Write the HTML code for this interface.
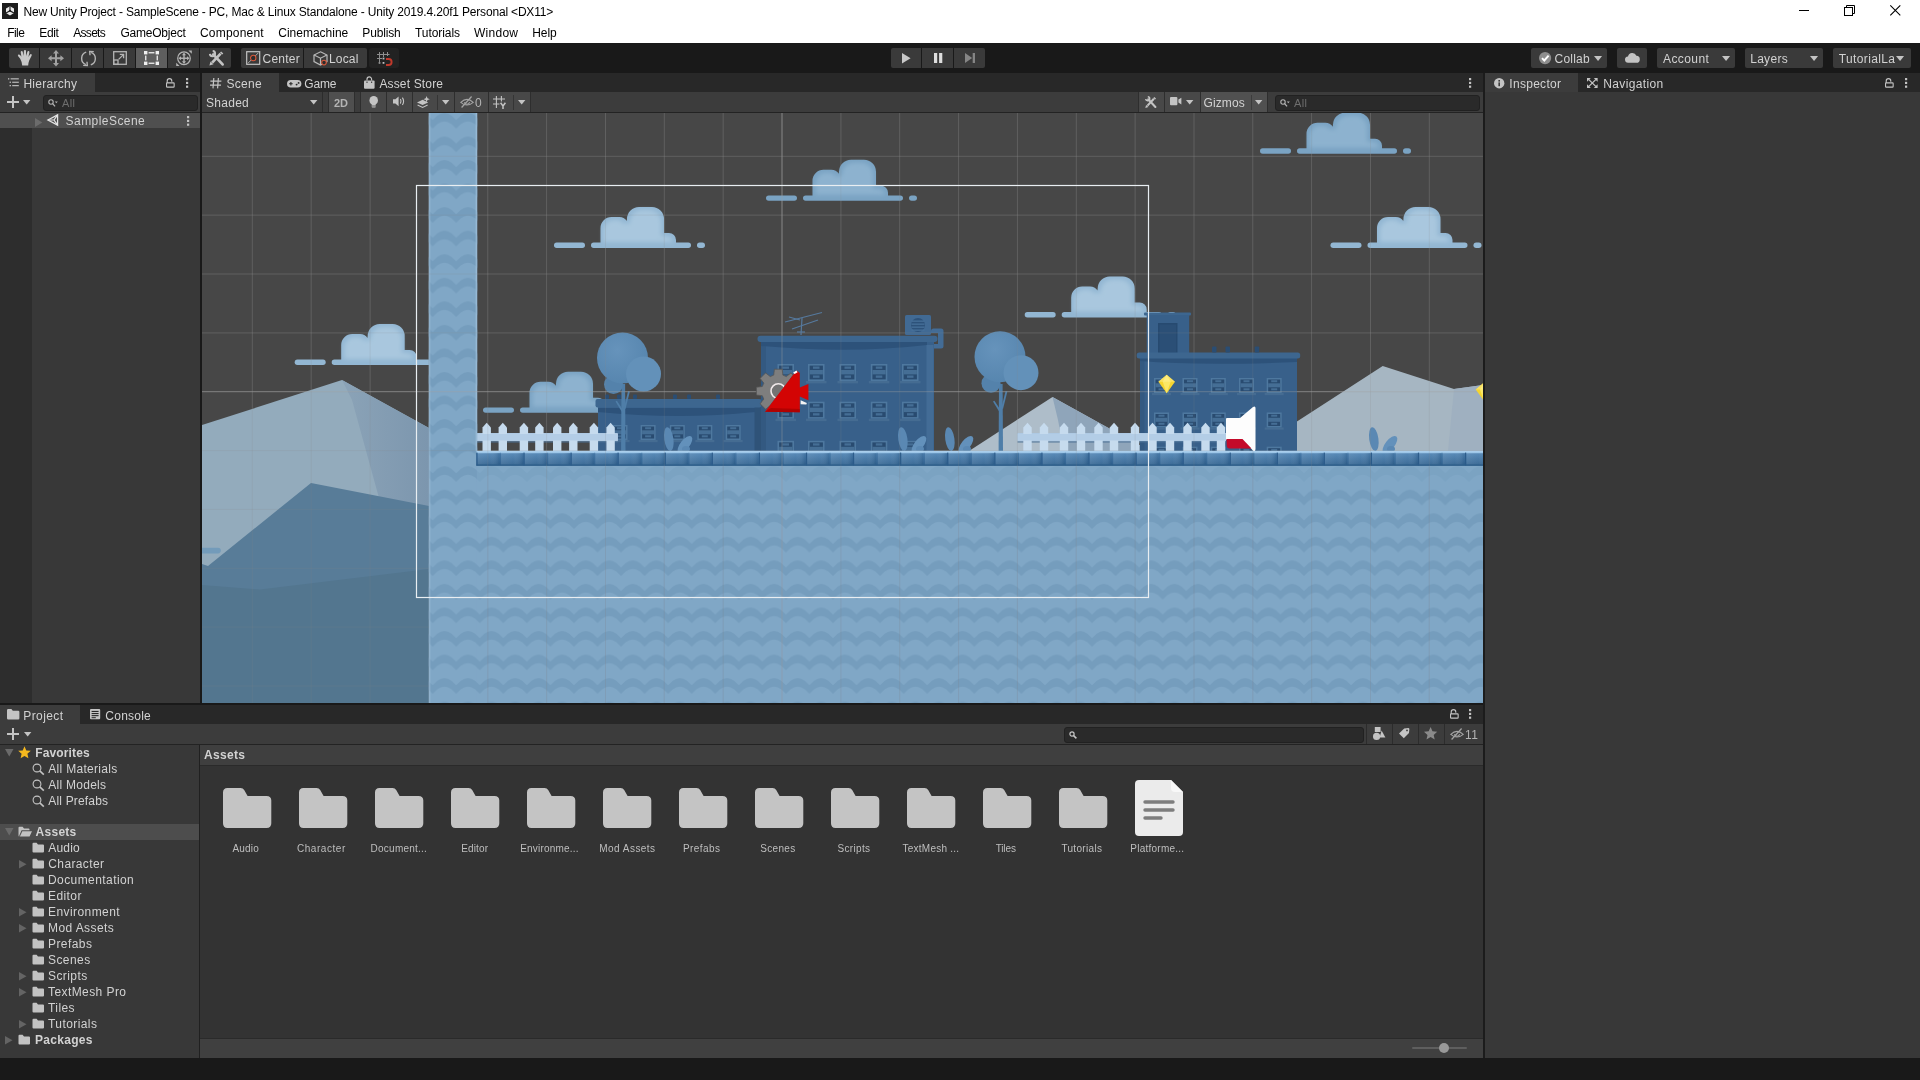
<!DOCTYPE html>
<html><head><meta charset="utf-8">
<style>
*{box-sizing:border-box;margin:0;padding:0}
html,body{width:1920px;height:1080px;overflow:hidden;background:#383838}
body{font-family:"Liberation Sans",sans-serif;font-size:12px;color:#d2d2d2;position:relative}
.abs{position:absolute}
.t{position:absolute;white-space:nowrap;line-height:16px;letter-spacing:.42px}
#title{left:0;top:0;width:1920px;height:43px;background:#fff;color:#000}
#title .t{letter-spacing:0}
#mainbar{left:0;top:43px;width:1920px;height:30px;background:#191919}
.tb{position:absolute;top:5px;height:20px;background:#3a3a3a;border-radius:2px}
.tabbar{position:absolute;height:19px;background:#282828}
.tab{position:absolute;top:0;height:19px;background:#3c3c3c;border-top:1px solid #3c3c3c}
.ptool{position:absolute;height:21px;background:#3c3c3c;border-bottom:1px solid #232323}
.sbtn{position:absolute;top:0;height:20px;background:#484848;border-left:1px solid #2e2e2e;border-right:1px solid #2e2e2e}
.search{position:absolute;background:#2a2a2a;border:1px solid #212121;border-radius:3px}
.row{position:absolute;left:0;height:16px;width:198px}
svg{position:absolute;overflow:visible}
.lab{font-size:10px;letter-spacing:.4px;color:#bebebe}
#root{position:absolute;left:0;top:0;width:1920px;height:1080px;will-change:transform}
</style></head><body><div id="root">
<!-- TITLE + MENU -->
<div id="title" class="abs">
<div class="abs" style="left:2px;top:3px;width:16px;height:16px;background:#222"></div>
<div class="t" style="left:23.40px;top:3.5px;letter-spacing:-0.177px">New Unity Project - SampleScene - PC, Mac &amp; Linux Standalone - Unity 2019.4.20f1 Personal &lt;DX11&gt;</div>
<div class="t" style="left:7.25px;top:24.5px;letter-spacing:-0.565px">File</div>
<div class="t" style="left:39.30px;top:24.5px;letter-spacing:-0.362px">Edit</div>
<div class="t" style="left:73.30px;top:24.5px;letter-spacing:-0.723px">Assets</div>
<div class="t" style="left:120.40px;top:24.5px;letter-spacing:-0.218px">GameObject</div>
<div class="t" style="left:200.00px;top:24.5px;letter-spacing:0.194px">Component</div>
<div class="t" style="left:278.30px;top:24.5px;letter-spacing:-0.005px">Cinemachine</div>
<div class="t" style="left:362.30px;top:24.5px;letter-spacing:-0.160px">Publish</div>
<div class="t" style="left:415.00px;top:24.5px;letter-spacing:-0.072px">Tutorials</div>
<div class="t" style="left:474.00px;top:24.5px;letter-spacing:0.263px">Window</div>
<div class="t" style="left:532.30px;top:24.5px;letter-spacing:-0.096px">Help</div>
</div>
<!-- MAIN TOOLBAR -->
<div id="mainbar" class="abs">
<div class="tb" style="left:9px;width:30px;border-radius:2px 0 0 2px"></div>
<div class="tb" style="left:40px;width:31px;border-radius:0"></div>
<div class="tb" style="left:72px;width:31px;border-radius:0"></div>
<div class="tb" style="left:104px;width:31px;border-radius:0"></div>
<div class="tb" style="left:136px;width:31px;border-radius:0;background:#5e5e5e"></div>
<div class="tb" style="left:168px;width:31px;border-radius:0"></div>
<div class="tb" style="left:200px;width:31px;border-radius:0 2px 2px 0"></div>
<div class="tb" style="left:241px;width:62px;border-radius:2px 0 0 2px"></div>
<div class="tb" style="left:304px;width:63px;border-radius:0 2px 2px 0"></div>
<div class="tb" style="left:369px;width:30px;background:#222;border-radius:3px"></div>
<div class="tb" style="left:891px;width:30px;border-radius:2px 0 0 2px"></div>
<div class="tb" style="left:922px;width:31px;border-radius:0"></div>
<div class="tb" style="left:954px;width:31px;border-radius:0 2px 2px 0"></div>
<div class="tb" style="left:1531px;width:76px"></div>
<div class="tb" style="left:1617px;width:30px"></div>
<div class="tb" style="left:1657px;width:78px"></div>
<div class="tb" style="left:1745px;width:78px"></div>
<div class="tb" style="left:1833px;width:78px"></div>
<div class="t" style="left:262.50px;top:8px;letter-spacing:0.244px">Center</div>
<div class="t" style="left:329.00px;top:8px;letter-spacing:0.153px">Local</div>
<div class="t" style="left:1554.60px;top:8px;letter-spacing:0.194px">Collab</div>
<div class="t" style="left:1663.00px;top:8px;letter-spacing:0.407px">Account</div>
<div class="t" style="left:1750.20px;top:8px;letter-spacing:0.294px">Layers</div>
<div class="t" style="left:1838.75px;top:8px;letter-spacing:0.370px">TutorialLa</div>
</div>
<!-- HIERARCHY -->
<div class="tabbar" style="left:0;top:73px;width:200px"><div class="tab" style="left:0;width:95px"></div>
<div class="t" style="left:23.40px;top:3px;letter-spacing:0.280px">Hierarchy</div></div>
<div class="ptool" style="left:0;top:92px;width:200px">
<div class="search" style="left:43px;top:3px;width:155px;height:16px"></div>
<div class="t" style="left:62px;top:3px;color:#6e6e6e;font-size:11px">All</div>
</div>
<div class="abs" style="left:0;top:113px;width:32px;height:590px;background:#2d2d2d"></div>
<div class="abs" style="left:0;top:113px;width:200px;height:15px;background:#4f4f4f"></div>
<div class="t" style="left:65.60px;top:112.5px;letter-spacing:0.448px">SampleScene</div>
<div class="abs" style="left:200px;top:73px;width:2px;height:632px;background:#191919"></div>
<!-- SCENE -->
<div class="tabbar" style="left:202px;top:73px;width:1281px"><div class="tab" style="left:0;width:77px"></div>
<div class="t" style="left:24.40px;top:3px;letter-spacing:0.292px">Scene</div>
<div class="t" style="left:102.30px;top:3px;letter-spacing:-0.163px">Game</div>
<div class="t" style="left:177.40px;top:3px;letter-spacing:0.157px">Asset Store</div>
</div>
<div class="ptool" id="stool" style="left:202px;top:92px;width:1281px">
<div class="t" style="left:4.00px;top:3px;letter-spacing:0.275px">Shaded</div>
<div class="abs" style="left:119.5px;top:0;width:1px;height:20px;background:#2c2c2c"></div><div class="sbtn" style="left:126px;width:27px;background:#4f4f4f"></div>
<div class="t" style="left:132px;top:3px;font-size:11px;color:#b4b4b4;letter-spacing:0"><b>2D</b></div>
<div class="sbtn" style="left:158px;width:27px"></div>
<div class="sbtn" style="left:184px;width:27px"></div>
<div class="sbtn" style="left:210px;width:43px"></div>
<div class="sbtn" style="left:252px;width:35px"></div>
<div class="sbtn" style="left:286px;width:43px"></div>
<div class="t" style="left:273px;top:3px;color:#b4b4b4">0</div>
<div class="sbtn" style="left:936px;width:27px"></div>
<div class="sbtn" style="left:962px;width:37px"></div>
<div class="sbtn" style="left:998px;width:68px;background:#505050"></div>
<div class="t" style="left:1001.50px;top:3px;letter-spacing:0.116px">Gizmos</div>
<div class="search" style="left:1073px;top:3px;width:205px;height:16px"></div>
<div class="t" style="left:1092px;top:3px;color:#6e6e6e;font-size:11px">All</div>
</div>
<div id="scene" class="abs" style="left:202px;top:113px;width:1281px;height:590px;background:#474747;overflow:hidden">
<svg width="1281" height="590" viewBox="202 113 1281 590" style="left:0;top:0">
<defs>
<linearGradient id="cg" x1="0" y1="0" x2="0" y2="1"><stop offset="0" stop-color="#9dbdd8"/><stop offset=".55" stop-color="#8eb2cf"/><stop offset="1" stop-color="#80a6c6"/></linearGradient>
<linearGradient id="mr" x1="0" y1="0" x2="1" y2="0"><stop offset="0" stop-color="#8ba3b7"/><stop offset="1" stop-color="#7c96ae"/></linearGradient>
<linearGradient id="tile" x1="0" y1="0" x2="0" y2="1"><stop offset="0" stop-color="#b4d6f1"/><stop offset=".12" stop-color="#9cc6e8"/><stop offset=".2" stop-color="#5084b3"/><stop offset=".85" stop-color="#386996"/><stop offset="1" stop-color="#2e5c87"/></linearGradient>
<linearGradient id="tsh" x1="0" y1="0" x2="1" y2="0"><stop offset="0" stop-color="#fff" stop-opacity=".10"/><stop offset=".55" stop-color="#fff" stop-opacity=".04"/><stop offset="1" stop-color="#0a3560" stop-opacity=".22"/></linearGradient>
<radialGradient id="tg" cx=".4" cy=".35" r=".7"><stop offset="0" stop-color="#6693bb"/><stop offset="1" stop-color="#5685ae"/></radialGradient>
<pattern id="wave" x="432.65" y="466.15" width="23.55" height="23.55" patternUnits="userSpaceOnUse">
<path d="M0,7 L4.6,2.6 Q11.775,-2.6 18.95,2.6 L23.55,7 L23.55,15.6 L18.95,11.2 Q11.775,6 4.6,11.2 L0,15.6 Z" fill="#759dbd"/>
</pattern>
<filter id="inner" x="-10%" y="-10%" width="120%" height="120%"><feMorphology operator="erode" radius="3.2"/><feGaussianBlur stdDeviation="2.2"/></filter>
<path id="cshape" d="M2.7,0 A2.7,2.7 0 0 1 2.7,-5.4 L9.5,-5.4 L9.5,-20 A11,11 0 0 1 20.5,-31 L28,-31 A9,9 0 0 1 35.8,-27 L36,-29 A12,12 0 0 1 48,-41 L61,-41 A12,12 0 0 1 73,-29 L73,-15 L78,-15 A7,7 0 0 1 85,-8 L85,-5.4 L97.3,-5.4 A2.7,2.7 0 0 1 97.3,0 Z"/>
<path id="cinner" d="M9.5,-5.4 L9.5,-20 A11,11 0 0 1 20.5,-31 L28,-31 A9,9 0 0 1 35.8,-27 L36,-29 A12,12 0 0 1 48,-41 L61,-41 A12,12 0 0 1 73,-29 L73,-15 L78,-15 A7,7 0 0 1 85,-8 L85,-3 L9.5,-3 Z"/>
<g id="cloudD"><rect x="-37" y="-5.4" width="31" height="5.4" rx="2.7" fill="#7aa3c3"/><rect x="106" y="-5.4" width="8" height="5.4" rx="2.7" fill="#7aa3c3"/><use href="#cshape" fill="#7aa3c3"/><use href="#cinner" fill="#8db2cf" filter="url(#inner)"/></g>
<g id="cloudL"><rect x="-37" y="-5.4" width="31" height="5.4" rx="2.7" fill="#93b7d3"/><rect x="106" y="-5.4" width="8" height="5.4" rx="2.7" fill="#93b7d3"/><use href="#cshape" fill="#93b7d3"/><use href="#cinner" fill="#a9c7de" filter="url(#inner)"/></g>
<g id="win"><rect x="0" y="0" width="16.5" height="17" fill="#4e789f"/><rect x="1.6" y="1.6" width="13.3" height="13.8" fill="#294b70"/><rect x="1.6" y="6" width="13.3" height="4.4" fill="#456e95"/><rect x="5" y="2.5" width="6.5" height="2.3" fill="#456e95"/><rect x="5" y="11.5" width="6.5" height="2.3" fill="#456e95"/><rect x="-2" y="17" width="20.5" height="2.4" fill="#456c92"/></g>
<g id="win2"><rect x="0" y="0" width="15" height="15" fill="#4e789f"/><rect x="1.5" y="1.5" width="12" height="12" fill="#294b70"/><rect x="1.5" y="5.3" width="12" height="4" fill="#456e95"/><rect x="4.5" y="2.2" width="6" height="2" fill="#456e95"/><rect x="4.5" y="10.3" width="6" height="2" fill="#456e95"/><rect x="-2" y="15" width="19" height="2.2" fill="#456c92"/></g>
<g id="bush"><ellipse cx="4.5" cy="-12" rx="4.6" ry="12" transform="rotate(-8 4.5 0)" fill="#5a88b3"/><ellipse cx="14" cy="-8" rx="4.6" ry="10.5" transform="rotate(38 14 0)" fill="#6391bb"/><ellipse cx="20" cy="-2" rx="4" ry="3" fill="#5a88b3"/></g>
</defs>
<path d="M252.3,113V703M311.2,113V703M370.1,113V703M428.9,113V703M487.8,113V703M546.6,113V703M605.5,113V703M664.3,113V703M723.2,113V703M782.0,113V703M840.9,113V703M899.7,113V703M958.6,113V703M1017.4,113V703M1076.3,113V703M1135.1,113V703M1194.0,113V703M1252.8,113V703M1311.6,113V703M1370.5,113V703M1429.3,113V703M202,156.3H1483M202,215.1H1483M202,274.0H1483M202,332.9H1483M202,391.7H1483M202,450.6H1483M202,509.4H429M202,568.3H429M202,627.1H429M202,686.0H429" stroke="#8a8a8a" stroke-opacity=".26" stroke-width="1" fill="none"/>
<path d="M782.0,113V703M202,391.7H1483" stroke="#a0a0a0" stroke-opacity=".25" stroke-width="1" fill="none"/>
<polygon points="202,425 342,380 429,428 429,703 202,703" fill="#93abbc"/>
<polygon points="342,380 429,428 429,520 379,498 352,400" fill="url(#mr)"/>
<polygon points="202,564 208,566 311,483 429,506 429,703 202,703" fill="#587c98"/>
<polygon points="202,585 260,589.5 429,569 429,703 202,703" fill="#53768f"/>
<rect x="198" y="547.8" width="22.8" height="5.6" rx="2.8" fill="#739bba"/>
<polygon points="969,451 1052.5,397 1150,451" fill="#aebdc9"/>
<polygon points="1052.5,397 1150,451 1064,451 1058,420" fill="#8fa5ba"/>
<polygon points="1290,426 1382.7,366 1454,389 1483,385 1483,451 1290,451" fill="#a6b6c2"/>
<polygon points="1454,389 1483,385 1483,451 1448,451" fill="#9fb0c0"/>
<use href="#cloudD" x="1297" y="153.7"/>
<use href="#cloudL" x="1367.5" y="248"/>
<use href="#cloudL" x="591" y="248"/>
<use href="#cloudD" x="803" y="200.8"/>
<use href="#cloudL" x="331.7" y="365"/>
<use href="#cloudL" x="1061.7" y="317.5"/>
<use href="#cloudD" x="520" y="412.8"/>
<rect x="598" y="404" width="163" height="47" fill="#38608a"/>
<rect x="754.5" y="407" width="6.5" height="44" fill="#2f5378"/>
<path d="M598,408 L755,408 L755,412 Q680,420 598,412 Z" fill="#2d527a"/>
<rect x="595.5" y="399" width="166" height="8.5" rx="2" fill="#3d668f"/>
<use href="#win2" x="612.5" y="425"/>
<use href="#win2" x="640.6" y="425"/>
<use href="#win2" x="669.8" y="425"/>
<use href="#win2" x="697.3" y="425"/>
<use href="#win2" x="725.7" y="425"/>
<rect x="605" y="394.5" width="4" height="4.5" rx="1" fill="#2a4d73"/>
<rect x="617" y="394.5" width="4" height="4.5" rx="1" fill="#2a4d73"/>
<rect x="633" y="394.5" width="4" height="4.5" rx="1" fill="#2a4d73"/>
<rect x="673" y="394.5" width="4" height="4.5" rx="1" fill="#2a4d73"/>
<rect x="687" y="394.5" width="4" height="4.5" rx="1" fill="#2a4d73"/>
<rect x="716" y="394.5" width="4" height="4.5" rx="1" fill="#2a4d73"/>
<path d="M931,336 L931,331 Q931,328.5 933.5,328.5 L941,328.5 Q943.5,328.5 943.5,331 L943.5,346 Q943.5,348.5 941,348.5 L934,348.5 L934,451 L927,451 L927,344 L938,344 L938,333 L931,333 Z" fill="#436c96"/>
<rect x="761" y="341" width="173" height="110" fill="#38608a"/>
<rect x="761" y="341" width="5" height="110" fill="#335981"/>
<rect x="926.5" y="345" width="7" height="106" fill="#436c96"/>
<path d="M761,341 L927,341 L927,345 Q850,354 761,346 Z" fill="#2d527a"/>
<rect x="757.5" y="335.8" width="180" height="6.2" rx="3" fill="#3d668f"/>
<rect x="905" y="315" width="26" height="20" rx="1.5" fill="#416a94"/>
<circle cx="918" cy="325" r="7" fill="#2d527a"/>
<rect x="911.5" y="320.5" width="13" height="1.3" fill="#47709a"/>
<rect x="911.5" y="323.5" width="13" height="1.3" fill="#47709a"/>
<rect x="911.5" y="326.5" width="13" height="1.3" fill="#47709a"/>
<rect x="911.5" y="329.5" width="13" height="1.3" fill="#47709a"/>
<g stroke="#56799d" stroke-width="1.2" fill="none"><path d="M801,335 L802,318"/><path d="M785,322 L822,312.5"/><path d="M789,317 L800,320"/><path d="M792,329 L818,320"/><path d="M797,332 L805,332"/></g>
<use href="#win" x="777.5" y="364"/>
<use href="#win" x="808" y="364"/>
<use href="#win" x="839.5" y="364"/>
<use href="#win" x="870.8" y="364"/>
<use href="#win" x="902" y="364"/>
<use href="#win" x="777.5" y="401.7"/>
<use href="#win" x="808" y="401.7"/>
<use href="#win" x="839.5" y="401.7"/>
<use href="#win" x="870.8" y="401.7"/>
<use href="#win" x="902" y="401.7"/>
<use href="#win" x="777.5" y="440.8"/>
<use href="#win" x="808" y="440.8"/>
<use href="#win" x="839.5" y="440.8"/>
<use href="#win" x="870.8" y="440.8"/>
<use href="#win" x="902" y="440.8"/>
<rect x="1144" y="312.5" width="47" height="3" rx="1" fill="#3d668f"/>
<rect x="1146.7" y="315" width="42.5" height="38" fill="#38608a"/>
<rect x="1158" y="323" width="19.5" height="30" fill="#274a70"/><rect x="1159.5" y="324.5" width="16.5" height="28" fill="#2b4f76"/>
<rect x="1140" y="358" width="157" height="93" fill="#38608a"/>
<rect x="1140" y="358" width="4.5" height="93" fill="#335981"/>
<path d="M1140,358 L1297,358 L1297,362 Q1200,366 1140,361 Z" fill="#2d527a"/>
<rect x="1136.7" y="352.5" width="163.5" height="6" rx="2.5" fill="#3d668f"/>
<rect x="1212" y="346.5" width="4.5" height="6" rx="1" fill="#2a4d73"/>
<rect x="1225.5" y="346.5" width="4.5" height="6" rx="1" fill="#2a4d73"/>
<rect x="1254.7" y="346.5" width="4.5" height="6" rx="1" fill="#2a4d73"/>
<use href="#win2" x="1154" y="378"/>
<use href="#win2" x="1182.5" y="378"/>
<use href="#win2" x="1210.8" y="378"/>
<use href="#win2" x="1239" y="378"/>
<use href="#win2" x="1266.7" y="378"/>
<use href="#win2" x="1154" y="412.5"/>
<use href="#win2" x="1182.5" y="412.5"/>
<use href="#win2" x="1210.8" y="412.5"/>
<use href="#win2" x="1239" y="412.5"/>
<use href="#win2" x="1266.7" y="412.5"/>
<use href="#win2" x="1154" y="446.7"/>
<use href="#win2" x="1182.5" y="446.7"/>
<use href="#win2" x="1210.8" y="446.7"/>
<use href="#win2" x="1239" y="446.7"/>
<use href="#win2" x="1266.7" y="446.7"/>
<path d="M621.1,451 L621.5,384 L625.1,384 L625.5,451 Z" fill="#4f7ea8"/>
<path d="M623.9,408 L628.1,391 L629.9,391.6 L625.5,409 Z" fill="#4f7ea8"/>
<path d="M621.9,412 L615.5,401.6 L616.9,400.8 L622.1,408.6 Z" fill="#4f7ea8"/>
<circle cx="613.5" cy="384.5" r="9.5" fill="#5482ab"/>
<circle cx="622.5" cy="358" r="25.5" fill="url(#tg)"/>
<circle cx="643.5" cy="374" r="17.5" fill="#6391b9"/>
<path d="M998.6,451 L999,384 L1002.6,384 L1003,451 Z" fill="#4f7ea8"/>
<path d="M1001.4,408 L1005.6,391 L1007.4,391.6 L1003,409 Z" fill="#4f7ea8"/>
<path d="M999.4,412 L993,401.6 L994.4,400.8 L999.6,408.6 Z" fill="#4f7ea8"/>
<circle cx="991" cy="383.2" r="9.5" fill="#5482ab"/>
<circle cx="1000" cy="356.7" r="25.5" fill="url(#tg)"/>
<circle cx="1021" cy="372.7" r="17.5" fill="#6391b9"/>
<use href="#bush" x="900" y="451"/>
<use href="#bush" x="947" y="451"/>
<use href="#bush" x="1371" y="451"/>
<use href="#bush" x="666" y="451"/>
<rect x="476.5" y="433" width="141.29999999999995" height="8.3" fill="#aec9e3"/>
<rect x="476.5" y="441.3" width="141.29999999999995" height="1.3" fill="#4a6f94" opacity=".75"/>
<path d="M482.5,451 L482.5,427.5 L486.7,422.8 L490.9,427.5 L490.9,451 Z" fill="#c6dbee"/>
<path d="M498.6,451 L498.6,427.5 L502.8,422.8 L507.0,427.5 L507.0,451 Z" fill="#c6dbee"/>
<path d="M519.6999999999999,451 L519.6999999999999,427.5 L523.9,422.8 L528.1,427.5 L528.1,451 Z" fill="#c6dbee"/>
<path d="M535.1999999999999,451 L535.1999999999999,427.5 L539.4,422.8 L543.6,427.5 L543.6,451 Z" fill="#c6dbee"/>
<path d="M553.0,451 L553.0,427.5 L557.2,422.8 L561.4000000000001,427.5 L561.4000000000001,451 Z" fill="#c6dbee"/>
<path d="M569.0999999999999,451 L569.0999999999999,427.5 L573.3,422.8 L577.5,427.5 L577.5,451 Z" fill="#c6dbee"/>
<path d="M589.6999999999999,451 L589.6999999999999,427.5 L593.9,422.8 L598.1,427.5 L598.1,451 Z" fill="#c6dbee"/>
<path d="M606.4,451 L606.4,427.5 L610.6,422.8 L614.8000000000001,427.5 L614.8000000000001,451 Z" fill="#c6dbee"/>
<rect x="476.5" y="434" width="141.29999999999995" height="6.5" fill="#b3cde6"/>
<rect x="1017.5" y="433" width="208.5" height="8.3" fill="#aec9e3"/>
<rect x="1017.5" y="441.3" width="208.5" height="1.3" fill="#4a6f94" opacity=".75"/>
<path d="M1023.3,451 L1023.3,427.5 L1027.5,422.8 L1031.7,427.5 L1031.7,451 Z" fill="#c6dbee"/>
<path d="M1039.8,451 L1039.8,427.5 L1044,422.8 L1048.2,427.5 L1048.2,451 Z" fill="#c6dbee"/>
<path d="M1059.8,451 L1059.8,427.5 L1064,422.8 L1068.2,427.5 L1068.2,451 Z" fill="#c6dbee"/>
<path d="M1076.8,451 L1076.8,427.5 L1081,422.8 L1085.2,427.5 L1085.2,451 Z" fill="#c6dbee"/>
<path d="M1094.3,451 L1094.3,427.5 L1098.5,422.8 L1102.7,427.5 L1102.7,451 Z" fill="#c6dbee"/>
<path d="M1109.8,451 L1109.8,427.5 L1114,422.8 L1118.2,427.5 L1118.2,451 Z" fill="#c6dbee"/>
<path d="M1130.8,451 L1130.8,427.5 L1135,422.8 L1139.2,427.5 L1139.2,451 Z" fill="#c6dbee"/>
<path d="M1148.3,451 L1148.3,427.5 L1152.5,422.8 L1156.7,427.5 L1156.7,451 Z" fill="#c6dbee"/>
<path d="M1165.8,451 L1165.8,427.5 L1170,422.8 L1174.2,427.5 L1174.2,451 Z" fill="#c6dbee"/>
<path d="M1183.3,451 L1183.3,427.5 L1187.5,422.8 L1191.7,427.5 L1191.7,451 Z" fill="#c6dbee"/>
<path d="M1201.3,451 L1201.3,427.5 L1205.5,422.8 L1209.7,427.5 L1209.7,451 Z" fill="#c6dbee"/>
<path d="M1216.8,451 L1216.8,427.5 L1221,422.8 L1225.2,427.5 L1225.2,451 Z" fill="#c6dbee"/>
<rect x="1017.5" y="434" width="208.5" height="6.5" fill="#b3cde6"/>
<rect x="428.8" y="113" width="48.4" height="590" fill="#80a7c6"/>
<rect x="476.8" y="465.4" width="1007" height="238" fill="#80a7c6"/>
<rect x="428.8" y="113" width="48.4" height="590" fill="url(#wave)"/>
<rect x="476.8" y="465.4" width="1007" height="238" fill="url(#wave)"/>
<rect x="428.8" y="113" width="1.6" height="590" fill="#a9c8e2" opacity=".4"/>
<rect x="475.6" y="113" width="1.6" height="338" fill="#a9c8e2" opacity=".55"/>
<rect x="476.8" y="465.4" width="1007" height="16.5" fill="#80a7c6" opacity=".55"/>
<rect x="476.5" y="450.8" width="1007" height="14.8" fill="url(#tile)"/>
<rect x="477.6" y="453" width="22" height="11.6" fill="url(#tsh)"/>
<rect x="476.3" y="452.6" width="1.2" height="13" fill="#2a5a88" opacity="0.95"/>
<rect x="501.1" y="453" width="22" height="11.6" fill="url(#tsh)"/>
<rect x="499.8" y="452.6" width="1.2" height="13" fill="#2a5a88" opacity="0.3"/>
<rect x="524.7" y="453" width="22" height="11.6" fill="url(#tsh)"/>
<rect x="523.4" y="452.6" width="1.2" height="13" fill="#2a5a88" opacity="0.95"/>
<rect x="548.2" y="453" width="22" height="11.6" fill="url(#tsh)"/>
<rect x="546.9" y="452.6" width="1.2" height="13" fill="#2a5a88" opacity="0.3"/>
<rect x="571.8" y="453" width="22" height="11.6" fill="url(#tsh)"/>
<rect x="570.5" y="452.6" width="1.2" height="13" fill="#2a5a88" opacity="0.95"/>
<rect x="595.3" y="453" width="22" height="11.6" fill="url(#tsh)"/>
<rect x="594.0" y="452.6" width="1.2" height="13" fill="#2a5a88" opacity="0.3"/>
<rect x="618.8" y="453" width="22" height="11.6" fill="url(#tsh)"/>
<rect x="617.5" y="452.6" width="1.2" height="13" fill="#2a5a88" opacity="0.95"/>
<rect x="642.4" y="453" width="22" height="11.6" fill="url(#tsh)"/>
<rect x="641.1" y="452.6" width="1.2" height="13" fill="#2a5a88" opacity="0.3"/>
<rect x="665.9" y="453" width="22" height="11.6" fill="url(#tsh)"/>
<rect x="664.6" y="452.6" width="1.2" height="13" fill="#2a5a88" opacity="0.95"/>
<rect x="689.5" y="453" width="22" height="11.6" fill="url(#tsh)"/>
<rect x="688.2" y="452.6" width="1.2" height="13" fill="#2a5a88" opacity="0.3"/>
<rect x="713.0" y="453" width="22" height="11.6" fill="url(#tsh)"/>
<rect x="711.7" y="452.6" width="1.2" height="13" fill="#2a5a88" opacity="0.95"/>
<rect x="736.5" y="453" width="22" height="11.6" fill="url(#tsh)"/>
<rect x="735.2" y="452.6" width="1.2" height="13" fill="#2a5a88" opacity="0.3"/>
<rect x="760.1" y="453" width="22" height="11.6" fill="url(#tsh)"/>
<rect x="758.8" y="452.6" width="1.2" height="13" fill="#2a5a88" opacity="0.95"/>
<rect x="783.6" y="453" width="22" height="11.6" fill="url(#tsh)"/>
<rect x="782.3" y="452.6" width="1.2" height="13" fill="#2a5a88" opacity="0.3"/>
<rect x="807.2" y="453" width="22" height="11.6" fill="url(#tsh)"/>
<rect x="805.9" y="452.6" width="1.2" height="13" fill="#2a5a88" opacity="0.95"/>
<rect x="830.7" y="453" width="22" height="11.6" fill="url(#tsh)"/>
<rect x="829.4" y="452.6" width="1.2" height="13" fill="#2a5a88" opacity="0.3"/>
<rect x="854.2" y="453" width="22" height="11.6" fill="url(#tsh)"/>
<rect x="852.9" y="452.6" width="1.2" height="13" fill="#2a5a88" opacity="0.95"/>
<rect x="877.8" y="453" width="22" height="11.6" fill="url(#tsh)"/>
<rect x="876.5" y="452.6" width="1.2" height="13" fill="#2a5a88" opacity="0.3"/>
<rect x="901.3" y="453" width="22" height="11.6" fill="url(#tsh)"/>
<rect x="900.0" y="452.6" width="1.2" height="13" fill="#2a5a88" opacity="0.95"/>
<rect x="924.9" y="453" width="22" height="11.6" fill="url(#tsh)"/>
<rect x="923.6" y="452.6" width="1.2" height="13" fill="#2a5a88" opacity="0.3"/>
<rect x="948.4" y="453" width="22" height="11.6" fill="url(#tsh)"/>
<rect x="947.1" y="452.6" width="1.2" height="13" fill="#2a5a88" opacity="0.95"/>
<rect x="971.9" y="453" width="22" height="11.6" fill="url(#tsh)"/>
<rect x="970.6" y="452.6" width="1.2" height="13" fill="#2a5a88" opacity="0.3"/>
<rect x="995.5" y="453" width="22" height="11.6" fill="url(#tsh)"/>
<rect x="994.2" y="452.6" width="1.2" height="13" fill="#2a5a88" opacity="0.95"/>
<rect x="1019.0" y="453" width="22" height="11.6" fill="url(#tsh)"/>
<rect x="1017.7" y="452.6" width="1.2" height="13" fill="#2a5a88" opacity="0.3"/>
<rect x="1042.6" y="453" width="22" height="11.6" fill="url(#tsh)"/>
<rect x="1041.3" y="452.6" width="1.2" height="13" fill="#2a5a88" opacity="0.95"/>
<rect x="1066.1" y="453" width="22" height="11.6" fill="url(#tsh)"/>
<rect x="1064.8" y="452.6" width="1.2" height="13" fill="#2a5a88" opacity="0.3"/>
<rect x="1089.6" y="453" width="22" height="11.6" fill="url(#tsh)"/>
<rect x="1088.3" y="452.6" width="1.2" height="13" fill="#2a5a88" opacity="0.95"/>
<rect x="1113.2" y="453" width="22" height="11.6" fill="url(#tsh)"/>
<rect x="1111.9" y="452.6" width="1.2" height="13" fill="#2a5a88" opacity="0.3"/>
<rect x="1136.7" y="453" width="22" height="11.6" fill="url(#tsh)"/>
<rect x="1135.4" y="452.6" width="1.2" height="13" fill="#2a5a88" opacity="0.95"/>
<rect x="1160.3" y="453" width="22" height="11.6" fill="url(#tsh)"/>
<rect x="1159.0" y="452.6" width="1.2" height="13" fill="#2a5a88" opacity="0.3"/>
<rect x="1183.8" y="453" width="22" height="11.6" fill="url(#tsh)"/>
<rect x="1182.5" y="452.6" width="1.2" height="13" fill="#2a5a88" opacity="0.95"/>
<rect x="1207.3" y="453" width="22" height="11.6" fill="url(#tsh)"/>
<rect x="1206.0" y="452.6" width="1.2" height="13" fill="#2a5a88" opacity="0.3"/>
<rect x="1230.9" y="453" width="22" height="11.6" fill="url(#tsh)"/>
<rect x="1229.6" y="452.6" width="1.2" height="13" fill="#2a5a88" opacity="0.95"/>
<rect x="1254.4" y="453" width="22" height="11.6" fill="url(#tsh)"/>
<rect x="1253.1" y="452.6" width="1.2" height="13" fill="#2a5a88" opacity="0.3"/>
<rect x="1278.0" y="453" width="22" height="11.6" fill="url(#tsh)"/>
<rect x="1276.7" y="452.6" width="1.2" height="13" fill="#2a5a88" opacity="0.95"/>
<rect x="1301.5" y="453" width="22" height="11.6" fill="url(#tsh)"/>
<rect x="1300.2" y="452.6" width="1.2" height="13" fill="#2a5a88" opacity="0.3"/>
<rect x="1325.0" y="453" width="22" height="11.6" fill="url(#tsh)"/>
<rect x="1323.7" y="452.6" width="1.2" height="13" fill="#2a5a88" opacity="0.95"/>
<rect x="1348.6" y="453" width="22" height="11.6" fill="url(#tsh)"/>
<rect x="1347.3" y="452.6" width="1.2" height="13" fill="#2a5a88" opacity="0.3"/>
<rect x="1372.1" y="453" width="22" height="11.6" fill="url(#tsh)"/>
<rect x="1370.8" y="452.6" width="1.2" height="13" fill="#2a5a88" opacity="0.95"/>
<rect x="1395.7" y="453" width="22" height="11.6" fill="url(#tsh)"/>
<rect x="1394.4" y="452.6" width="1.2" height="13" fill="#2a5a88" opacity="0.3"/>
<rect x="1419.2" y="453" width="22" height="11.6" fill="url(#tsh)"/>
<rect x="1417.9" y="452.6" width="1.2" height="13" fill="#2a5a88" opacity="0.95"/>
<rect x="1442.7" y="453" width="22" height="11.6" fill="url(#tsh)"/>
<rect x="1441.4" y="452.6" width="1.2" height="13" fill="#2a5a88" opacity="0.3"/>
<rect x="1466.3" y="453" width="22" height="11.6" fill="url(#tsh)"/>
<rect x="1465.0" y="452.6" width="1.2" height="13" fill="#2a5a88" opacity="0.95"/>
<rect x="476.5" y="464.4" width="1007" height="1.6" fill="#2f618f" opacity=".7"/>
<path d="M487.8,466V703M546.6,466V703M605.5,466V703M664.3,466V703M723.1,466V703M782.0,466V703M840.9,466V703M899.7,466V703M958.5,466V703M1017.4,466V703M1076.2,466V703M1135.1,466V703M1194.0,466V703M1252.8,466V703M1311.7,466V703M1370.5,466V703M1429.3,466V703" stroke="#6f8aa3" stroke-opacity=".14" stroke-width="1" fill="none"/>
<path d="M252.3,113V703M311.2,113V703M370.1,113V703M428.9,113V703M487.8,113V703M546.6,113V703M605.5,113V703M664.3,113V703M723.2,113V703M782.0,113V703M840.9,113V703M899.7,113V703M958.6,113V703M1017.4,113V703M1076.3,113V703M1135.1,113V703M1194.0,113V703M1252.8,113V703M1311.6,113V703M1370.5,113V703M1429.3,113V703M202,156.3H1483M202,215.1H1483M202,274.0H1483M202,332.9H1483M202,391.7H1483M202,450.6H1483M202,509.4H429M202,568.3H429M202,627.1H429M202,686.0H429" stroke="#8a8a8a" stroke-opacity=".17" stroke-width="1" fill="none"/>
<path d="M782.0,113V703M202,391.7H1483" stroke="#b0b0b0" stroke-opacity=".28" stroke-width="1" fill="none"/>
<rect x="416.5" y="185.5" width="732" height="412" fill="none" stroke="#e9eef2" stroke-width="1.2"/>
<clipPath id="gclip"><polygon points="740,350 800.5,350 796.4,370.6 765,411.7 740,440"/></clipPath>
<g clip-path="url(#gclip)"><polygon points="794.3,386.5 800.2,387.2 800.2,395.0 794.3,395.7 792.8,399.1 796.5,403.8 791.0,409.3 786.3,405.6 782.9,407.1 782.2,413.0 774.4,413.0 773.7,407.1 770.3,405.6 765.6,409.3 760.1,403.8 763.8,399.1 762.3,395.7 756.4,395.0 756.4,387.2 762.3,386.5 763.8,383.1 760.1,378.4 765.6,372.9 770.3,376.6 773.7,375.1 774.4,369.2 782.2,369.2 782.9,375.1 786.3,376.6 791.0,372.9 796.5,378.4 792.8,383.1" fill="#7e7e7e" stroke="#555" stroke-width=".8"/><circle cx="778.3" cy="391.1" r="7.3" fill="#737373" stroke="#f1e9ea" stroke-width="1.6"/></g>
<polygon points="796.4,370.6 799.8,373 799.8,387.4 808.4,383.9 808.4,400.2 799.8,396.6 799.8,412.3 765,411.8" fill="#d30404"/>
<polygon points="765,411.8 799.8,412.3 799.8,409 771,408" fill="#a70303" opacity=".8"/>
<polygon points="793.2,372.6 796.4,370.6 797.6,372.2 794.6,374" fill="#fff"/>
<polygon points="800.6,400.2 806.8,403 806.4,404.6 800.6,404.2" fill="#f4f4f4"/>
<path d="M1166.7,374.8 L1175.0,381.8 L1166.7,393.3 L1158.4,381.8 Z" fill="#f6d52f"/>
<path d="M1166.7,374.8 L1170.7,381.8 L1166.7,393.3 L1162.7,381.8 Z" fill="#fbe766"/>
<path d="M1158.4,381.8 L1175.0,381.8 L1166.7,374.8 Z" fill="#fff2a0" opacity=".45"/>
<path d="M1484,382.5 L1492.3,389.5 L1484,401.0 L1475.7,389.5 Z" fill="#f6d52f"/>
<path d="M1484,382.5 L1488,389.5 L1484,401.0 L1480,389.5 Z" fill="#fbe766"/>
<path d="M1475.7,389.5 L1492.3,389.5 L1484,382.5 Z" fill="#fff2a0" opacity=".45"/>
<path d="M1226,419 Q1226,418 1227,418 L1240,418 L1253,407 Q1255.5,405.5 1255.5,408 L1255.5,449 Q1255.5,452 1253,450.5 L1242,440 L1227,440 Q1226,440 1226,439 Z" fill="#fdfdfd"/>
<path d="M1226.5,439 L1242.5,439 L1251.5,448.5 L1229,448.5 Q1227,448 1226.8,446 Z" fill="#c40a2a"/>
</svg>
</div>
<div class="abs" style="left:1483px;top:73px;width:2px;height:985px;background:#1c1c1c"></div>
<!-- INSPECTOR -->
<div class="tabbar" style="left:1485px;top:73px;width:435px"><div class="tab" style="left:0;width:93px"></div>
<div class="t" style="left:24.30px;top:3px;letter-spacing:0.293px">Inspector</div>
<div class="t" style="left:118.30px;top:3px;letter-spacing:0.366px">Navigation</div>
</div>
<div class="abs" style="left:1485px;top:92px;width:435px;height:966px;background:#383838"></div>
<!-- PROJECT -->
<div class="abs" style="left:0;top:703px;width:1483px;height:2px;background:#191919"></div>
<div class="tabbar" style="left:0;top:705px;width:1483px"><div class="tab" style="left:0;width:80px"></div>
<div class="t" style="left:23.30px;top:3px;letter-spacing:0.390px">Project</div>
<div class="t" style="left:105.30px;top:3px;letter-spacing:0.245px">Console</div>
</div>
<div class="ptool" style="left:0;top:724px;width:1483px">
<div class="search" style="left:1064px;top:3px;width:300px;height:16px"></div>
<div class="abs" style="left:1366px;top:0;width:1px;height:20px;background:#2c2c2c"></div>
<div class="abs" style="left:1392px;top:0;width:1px;height:20px;background:#2c2c2c"></div>
<div class="abs" style="left:1418px;top:0;width:1px;height:20px;background:#2c2c2c"></div>
<div class="abs" style="left:1444px;top:0;width:1px;height:20px;background:#2c2c2c"></div>
<div class="t" style="left:1465px;top:3px;color:#b4b4b4">11</div>
</div>
<div class="abs" id="ptree" style="left:0;top:745px;width:199px;height:313px;background:#383838">
<svg width="9" height="8" style="left:5px;top:4px"><path d="M0,0 L8.5,0 L4.25,7.5 Z" fill="#6a6a6a"/></svg>
<svg width="13" height="13" style="left:18px;top:1px"><path d="M6.5,0.3 L8.3,4.4 L12.8,4.8 L9.4,7.8 L10.4,12.2 L6.5,9.9 L2.6,12.2 L3.6,7.8 L0.2,4.8 L4.7,4.4 Z" fill="#f5b81e"/></svg>
<div class="t" style="left:35.30px;top:0;font-weight:bold;letter-spacing:0.130px">Favorites</div>
<svg width="13" height="13" style="left:32px;top:18px"><circle cx="5" cy="5" r="3.9" fill="none" stroke="#c4c4c4" stroke-width="1.1"/><path d="M7.8,7.8 L11.8,11.6" stroke="#c4c4c4" stroke-width="1.6"/></svg>
<div class="t" style="left:48.30px;top:16px;letter-spacing:0.295px">All Materials</div>
<svg width="13" height="13" style="left:32px;top:34px"><circle cx="5" cy="5" r="3.9" fill="none" stroke="#c4c4c4" stroke-width="1.1"/><path d="M7.8,7.8 L11.8,11.6" stroke="#c4c4c4" stroke-width="1.6"/></svg>
<div class="t" style="left:48.30px;top:32px;letter-spacing:0.260px">All Models</div>
<svg width="13" height="13" style="left:32px;top:50px"><circle cx="5" cy="5" r="3.9" fill="none" stroke="#c4c4c4" stroke-width="1.1"/><path d="M7.8,7.8 L11.8,11.6" stroke="#c4c4c4" stroke-width="1.6"/></svg>
<div class="t" style="left:48.30px;top:48px;letter-spacing:0.167px">All Prefabs</div>
<div class="abs" style="left:0;top:79px;width:199px;height:16px;background:#4d4d4d"></div>
<svg width="9" height="8" style="left:5px;top:83px"><path d="M0,0 L8.5,0 L4.25,7.5 Z" fill="#6a6a6a"/></svg>
<svg width="15" height="12" style="left:18px;top:81px"><path d="M0.5,1.8 Q0.5,0.8 1.5,0.8 L4.6,0.8 L6,2.6 L10.5,2.6 Q11.5,2.6 11.5,3.6 L11.5,4.3 L3.6,4.3 L1.3,9.4 L1.3,10.6 Q0.5,10.6 0.5,9.6 Z" fill="#c2c2c2"/><path d="M4.3,5.2 L14,5.2 L11.6,10.6 L1.9,10.6 Z" fill="#c2c2c2"/></svg>
<div class="t" style="left:35.50px;top:79px;font-weight:bold;letter-spacing:0.288px">Assets</div>
<svg width="13" height="12" style="left:32px;top:97px"><path d="M0.5,1.8 Q0.5,0.8 1.5,0.8 L4.6,0.8 L6,2.6 L11,2.6 Q12,2.6 12,3.6 L12,9.6 Q12,10.6 11,10.6 L1.5,10.6 Q0.5,10.6 0.5,9.6 Z" fill="#c2c2c2"/></svg>
<div class="t" style="left:48.30px;top:95px;letter-spacing:0.174px">Audio</div>
<svg width="8" height="9" style="left:19px;top:115px"><path d="M0,0 L7.5,4.25 L0,8.5 Z" fill="#646464"/></svg>
<svg width="13" height="12" style="left:32px;top:113px"><path d="M0.5,1.8 Q0.5,0.8 1.5,0.8 L4.6,0.8 L6,2.6 L11,2.6 Q12,2.6 12,3.6 L12,9.6 Q12,10.6 11,10.6 L1.5,10.6 Q0.5,10.6 0.5,9.6 Z" fill="#c2c2c2"/></svg>
<div class="t" style="left:48.30px;top:111px;letter-spacing:0.377px">Character</div>
<svg width="13" height="12" style="left:32px;top:129px"><path d="M0.5,1.8 Q0.5,0.8 1.5,0.8 L4.6,0.8 L6,2.6 L11,2.6 Q12,2.6 12,3.6 L12,9.6 Q12,10.6 11,10.6 L1.5,10.6 Q0.5,10.6 0.5,9.6 Z" fill="#c2c2c2"/></svg>
<div class="t" style="left:48px;top:127px">Documentation</div>
<svg width="13" height="12" style="left:32px;top:145px"><path d="M0.5,1.8 Q0.5,0.8 1.5,0.8 L4.6,0.8 L6,2.6 L11,2.6 Q12,2.6 12,3.6 L12,9.6 Q12,10.6 11,10.6 L1.5,10.6 Q0.5,10.6 0.5,9.6 Z" fill="#c2c2c2"/></svg>
<div class="t" style="left:48px;top:143px">Editor</div>
<svg width="8" height="9" style="left:19px;top:163px"><path d="M0,0 L7.5,4.25 L0,8.5 Z" fill="#646464"/></svg>
<svg width="13" height="12" style="left:32px;top:161px"><path d="M0.5,1.8 Q0.5,0.8 1.5,0.8 L4.6,0.8 L6,2.6 L11,2.6 Q12,2.6 12,3.6 L12,9.6 Q12,10.6 11,10.6 L1.5,10.6 Q0.5,10.6 0.5,9.6 Z" fill="#c2c2c2"/></svg>
<div class="t" style="left:48px;top:159px">Environment</div>
<svg width="8" height="9" style="left:19px;top:179px"><path d="M0,0 L7.5,4.25 L0,8.5 Z" fill="#646464"/></svg>
<svg width="13" height="12" style="left:32px;top:177px"><path d="M0.5,1.8 Q0.5,0.8 1.5,0.8 L4.6,0.8 L6,2.6 L11,2.6 Q12,2.6 12,3.6 L12,9.6 Q12,10.6 11,10.6 L1.5,10.6 Q0.5,10.6 0.5,9.6 Z" fill="#c2c2c2"/></svg>
<div class="t" style="left:48px;top:175px">Mod Assets</div>
<svg width="13" height="12" style="left:32px;top:193px"><path d="M0.5,1.8 Q0.5,0.8 1.5,0.8 L4.6,0.8 L6,2.6 L11,2.6 Q12,2.6 12,3.6 L12,9.6 Q12,10.6 11,10.6 L1.5,10.6 Q0.5,10.6 0.5,9.6 Z" fill="#c2c2c2"/></svg>
<div class="t" style="left:48px;top:191px">Prefabs</div>
<svg width="13" height="12" style="left:32px;top:209px"><path d="M0.5,1.8 Q0.5,0.8 1.5,0.8 L4.6,0.8 L6,2.6 L11,2.6 Q12,2.6 12,3.6 L12,9.6 Q12,10.6 11,10.6 L1.5,10.6 Q0.5,10.6 0.5,9.6 Z" fill="#c2c2c2"/></svg>
<div class="t" style="left:48px;top:207px">Scenes</div>
<svg width="8" height="9" style="left:19px;top:227px"><path d="M0,0 L7.5,4.25 L0,8.5 Z" fill="#646464"/></svg>
<svg width="13" height="12" style="left:32px;top:225px"><path d="M0.5,1.8 Q0.5,0.8 1.5,0.8 L4.6,0.8 L6,2.6 L11,2.6 Q12,2.6 12,3.6 L12,9.6 Q12,10.6 11,10.6 L1.5,10.6 Q0.5,10.6 0.5,9.6 Z" fill="#c2c2c2"/></svg>
<div class="t" style="left:48px;top:223px">Scripts</div>
<svg width="8" height="9" style="left:19px;top:243px"><path d="M0,0 L7.5,4.25 L0,8.5 Z" fill="#646464"/></svg>
<svg width="13" height="12" style="left:32px;top:241px"><path d="M0.5,1.8 Q0.5,0.8 1.5,0.8 L4.6,0.8 L6,2.6 L11,2.6 Q12,2.6 12,3.6 L12,9.6 Q12,10.6 11,10.6 L1.5,10.6 Q0.5,10.6 0.5,9.6 Z" fill="#c2c2c2"/></svg>
<div class="t" style="left:48px;top:239px">TextMesh Pro</div>
<svg width="13" height="12" style="left:32px;top:257px"><path d="M0.5,1.8 Q0.5,0.8 1.5,0.8 L4.6,0.8 L6,2.6 L11,2.6 Q12,2.6 12,3.6 L12,9.6 Q12,10.6 11,10.6 L1.5,10.6 Q0.5,10.6 0.5,9.6 Z" fill="#c2c2c2"/></svg>
<div class="t" style="left:48px;top:255px">Tiles</div>
<svg width="8" height="9" style="left:19px;top:275px"><path d="M0,0 L7.5,4.25 L0,8.5 Z" fill="#646464"/></svg>
<svg width="13" height="12" style="left:32px;top:273px"><path d="M0.5,1.8 Q0.5,0.8 1.5,0.8 L4.6,0.8 L6,2.6 L11,2.6 Q12,2.6 12,3.6 L12,9.6 Q12,10.6 11,10.6 L1.5,10.6 Q0.5,10.6 0.5,9.6 Z" fill="#c2c2c2"/></svg>
<div class="t" style="left:48px;top:271px">Tutorials</div>
<svg width="8" height="9" style="left:5px;top:291px"><path d="M0,0 L7.5,4.25 L0,8.5 Z" fill="#646464"/></svg>
<svg width="13" height="12" style="left:18px;top:289px"><path d="M0.5,1.8 Q0.5,0.8 1.5,0.8 L4.6,0.8 L6,2.6 L11,2.6 Q12,2.6 12,3.6 L12,9.6 Q12,10.6 11,10.6 L1.5,10.6 Q0.5,10.6 0.5,9.6 Z" fill="#c2c2c2"/></svg>
<div class="t" style="left:35px;top:287px;font-weight:bold;letter-spacing:.3px">Packages</div>
</div>
<div class="abs" style="left:199px;top:745px;width:1px;height:313px;background:#202020"></div>
<div class="abs" style="left:200px;top:745px;width:1283px;height:293px;background:#333"></div>
<div class="abs" style="left:200px;top:745px;width:1283px;height:21px;background:#3f3f3f;border-bottom:1px solid #2a2a2a"></div>
<div class="t" style="left:204px;top:747px;font-weight:bold;letter-spacing:.3px">Assets</div>
<div class="abs" style="left:200px;top:1038px;width:1283px;height:20px;background:#404040;border-top:1px solid #2a2a2a"></div>
<div id="grid"><svg width="49" height="41" style="left:222.7px;top:788px"><path d="M0,4.5 Q0,0 4.5,0 L17.6,0 Q20,0 21.2,2 L24.6,8 L43.5,8 Q48.3,8 48.3,12.6 L48.3,35.2 Q48.3,40 43.5,40 L4.5,40 Q0,40 0,35.2 Z" fill="#c4c4c4"/></svg>
<div class="t lab" style="left:232.50px;top:841.4px;letter-spacing:0.168px">Audio</div>
<svg width="49" height="41" style="left:298.7px;top:788px"><path d="M0,4.5 Q0,0 4.5,0 L17.6,0 Q20,0 21.2,2 L24.6,8 L43.5,8 Q48.3,8 48.3,12.6 L48.3,35.2 Q48.3,40 43.5,40 L4.5,40 Q0,40 0,35.2 Z" fill="#c4c4c4"/></svg>
<div class="t lab" style="left:297.00px;top:841.4px;letter-spacing:0.543px">Character</div>
<svg width="49" height="41" style="left:374.7px;top:788px"><path d="M0,4.5 Q0,0 4.5,0 L17.6,0 Q20,0 21.2,2 L24.6,8 L43.5,8 Q48.3,8 48.3,12.6 L48.3,35.2 Q48.3,40 43.5,40 L4.5,40 Q0,40 0,35.2 Z" fill="#c4c4c4"/></svg>
<div class="t lab" style="left:370.60px;top:841.4px;letter-spacing:0.238px">Document...</div>
<svg width="49" height="41" style="left:450.7px;top:788px"><path d="M0,4.5 Q0,0 4.5,0 L17.6,0 Q20,0 21.2,2 L24.6,8 L43.5,8 Q48.3,8 48.3,12.6 L48.3,35.2 Q48.3,40 43.5,40 L4.5,40 Q0,40 0,35.2 Z" fill="#c4c4c4"/></svg>
<div class="t lab" style="left:461.20px;top:841.4px;letter-spacing:0.155px">Editor</div>
<svg width="49" height="41" style="left:526.7px;top:788px"><path d="M0,4.5 Q0,0 4.5,0 L17.6,0 Q20,0 21.2,2 L24.6,8 L43.5,8 Q48.3,8 48.3,12.6 L48.3,35.2 Q48.3,40 43.5,40 L4.5,40 Q0,40 0,35.2 Z" fill="#c4c4c4"/></svg>
<div class="t lab" style="left:520.20px;top:841.4px;letter-spacing:0.196px">Environme...</div>
<svg width="49" height="41" style="left:602.7px;top:788px"><path d="M0,4.5 Q0,0 4.5,0 L17.6,0 Q20,0 21.2,2 L24.6,8 L43.5,8 Q48.3,8 48.3,12.6 L48.3,35.2 Q48.3,40 43.5,40 L4.5,40 Q0,40 0,35.2 Z" fill="#c4c4c4"/></svg>
<div class="t lab" style="left:599.30px;top:841.4px;letter-spacing:0.455px">Mod Assets</div>
<svg width="49" height="41" style="left:678.7px;top:788px"><path d="M0,4.5 Q0,0 4.5,0 L17.6,0 Q20,0 21.2,2 L24.6,8 L43.5,8 Q48.3,8 48.3,12.6 L48.3,35.2 Q48.3,40 43.5,40 L4.5,40 Q0,40 0,35.2 Z" fill="#c4c4c4"/></svg>
<div class="t lab" style="left:683.00px;top:841.4px;letter-spacing:0.422px">Prefabs</div>
<svg width="49" height="41" style="left:754.7px;top:788px"><path d="M0,4.5 Q0,0 4.5,0 L17.6,0 Q20,0 21.2,2 L24.6,8 L43.5,8 Q48.3,8 48.3,12.6 L48.3,35.2 Q48.3,40 43.5,40 L4.5,40 Q0,40 0,35.2 Z" fill="#c4c4c4"/></svg>
<div class="t lab" style="left:760.20px;top:841.4px;letter-spacing:0.328px">Scenes</div>
<svg width="49" height="41" style="left:830.7px;top:788px"><path d="M0,4.5 Q0,0 4.5,0 L17.6,0 Q20,0 21.2,2 L24.6,8 L43.5,8 Q48.3,8 48.3,12.6 L48.3,35.2 Q48.3,40 43.5,40 L4.5,40 Q0,40 0,35.2 Z" fill="#c4c4c4"/></svg>
<div class="t lab" style="left:837.40px;top:841.4px;letter-spacing:0.356px">Scripts</div>
<svg width="49" height="41" style="left:906.7px;top:788px"><path d="M0,4.5 Q0,0 4.5,0 L17.6,0 Q20,0 21.2,2 L24.6,8 L43.5,8 Q48.3,8 48.3,12.6 L48.3,35.2 Q48.3,40 43.5,40 L4.5,40 Q0,40 0,35.2 Z" fill="#c4c4c4"/></svg>
<div class="t lab" style="left:902.50px;top:841.4px;letter-spacing:0.245px">TextMesh ...</div>
<svg width="49" height="41" style="left:982.7px;top:788px"><path d="M0,4.5 Q0,0 4.5,0 L17.6,0 Q20,0 21.2,2 L24.6,8 L43.5,8 Q48.3,8 48.3,12.6 L48.3,35.2 Q48.3,40 43.5,40 L4.5,40 Q0,40 0,35.2 Z" fill="#c4c4c4"/></svg>
<div class="t lab" style="left:995.70px;top:841.4px;letter-spacing:-0.138px">Tiles</div>
<svg width="49" height="41" style="left:1058.7px;top:788px"><path d="M0,4.5 Q0,0 4.5,0 L17.6,0 Q20,0 21.2,2 L24.6,8 L43.5,8 Q48.3,8 48.3,12.6 L48.3,35.2 Q48.3,40 43.5,40 L4.5,40 Q0,40 0,35.2 Z" fill="#c4c4c4"/></svg>
<div class="t lab" style="left:1061.40px;top:841.4px;letter-spacing:0.327px">Tutorials</div>
<svg width="49" height="56" style="left:1135px;top:780px"><path d="M0,4 Q0,0 4,0 L36,0 L48,12 L48,52 Q48,56 44,56 L4,56 Q0,56 0,52 Z" fill="#ebebeb"/><path d="M36,0 L48,12 L40,12 Q36,12 36,8 Z" fill="#f8f8f8"/><g stroke="#7d7d7d" stroke-width="3.4" stroke-linecap="round"><path d="M10,22 H38"/><path d="M10,30 H38"/><path d="M10,38 H26"/></g></svg>
<div class="t lab" style="left:1130.30px;top:841.4px;letter-spacing:0.242px">Platforme...</div>
<div class="abs" style="left:1412px;top:1047px;width:55px;height:2px;background:#5e5e5e;border-radius:1px"></div>
<div class="abs" style="left:1438.5px;top:1042.5px;width:10.5px;height:10.5px;background:#999;border-radius:50%"></div></div>
<!-- STATUS -->
<div class="abs" style="left:0;top:1058px;width:1920px;height:22px;background:#191919"></div>
<svg width="16" height="16" viewBox="0 0 16 16" style="left:2px;top:3px"><rect width="16" height="16" rx="1.5" fill="#1c1c1c"/><path d="M8,3.2 L12,5.4 L12,10 L8,12.4 L4,10 L4,5.4 Z" fill="#e9e9e9"/><path d="M8,3.2 L8,7.8 L12,10 M8,7.8 L4,10" stroke="#1c1c1c" stroke-width="1.1" fill="none"/><circle cx="8" cy="7.8" r="1.1" fill="#1c1c1c"/></svg>
<svg width="10" height="1" viewBox="0 0 10 1" style="left:1799px;top:10px"><rect width="10" height="1" fill="#000"/></svg>
<svg width="11" height="11" viewBox="0 0 11 11" style="left:1844px;top:5px"><rect x="0.5" y="2.5" width="8" height="8" fill="none" stroke="#000" stroke-width="1"/><path d="M2.5,2.5 V0.5 H10.5 V8.5 H8.5" fill="none" stroke="#000" stroke-width="1"/></svg>
<svg width="11" height="11" viewBox="0 0 11 11" style="left:1890px;top:5px"><path d="M0.3,0.3 L10.3,10.3 M10.3,0.3 L0.3,10.3" stroke="#000" stroke-width="1.1"/></svg>
<svg width="15" height="16" viewBox="0 0 15 16" style="left:17px;top:49.5px"><path d="M3.2,8.8 L1.2,6.3 Q0.4,5.2 1.4,4.6 Q2.3,4.1 3.1,5.1 L4.4,6.8 L3.7,2.2 Q3.5,1 4.6,0.9 Q5.6,0.8 5.8,2 L6.6,6 L6.9,1 Q6.9,0 8,0 Q9,0 9,1 L9.1,6 L10.4,1.8 Q10.7,0.8 11.7,1.1 Q12.6,1.4 12.4,2.4 L11.4,7 L13,4.6 Q13.6,3.8 14.4,4.3 Q15.1,4.8 14.6,5.7 L12.2,10.5 Q11.5,12.2 11.2,15.5 L5.2,15.5 Q4.8,11.5 3.2,8.8 Z" fill="#c8c8c8"/></svg>
<svg width="16" height="16.5" viewBox="0 0 16 16.5" style="left:47.8px;top:49.5px"><g fill="#a2a2a2"><path d="M8,0 L11,3.6 L5,3.6 Z"/><path d="M8,16.5 L11,12.9 L5,12.9 Z"/><path d="M0,8.25 L3.6,5.25 L3.6,11.25 Z"/><path d="M16,8.25 L12.4,5.25 L12.4,11.25 Z"/><rect x="7" y="3" width="2" height="10.5"/><rect x="3" y="7.25" width="10" height="2"/></g></svg>
<svg width="15" height="15" viewBox="0 0 15 15" style="left:80.5px;top:50.5px"><g fill="none" stroke="#b4b4b4" stroke-width="1.4"><path d="M5.2,1.2 A6.6,6.6 0 0 0 4.8,13.6"/><path d="M9.8,13.8 A6.6,6.6 0 0 0 10.2,1.4"/></g><path d="M2.2,14.4 L6.3,14.6 L6,10.8" fill="none" stroke="#b4b4b4" stroke-width="1.4"/><path d="M12.8,0.6 L8.7,0.4 L9,4.2" fill="none" stroke="#b4b4b4" stroke-width="1.4"/></svg>
<svg width="14" height="14" viewBox="0 0 14 14" style="left:113px;top:51px"><rect x="0.7" y="0.7" width="12.6" height="12.6" fill="none" stroke="#b4b4b4" stroke-width="1.3"/><rect x="0.7" y="9" width="4.3" height="4.3" fill="none" stroke="#b4b4b4" stroke-width="1.3"/><path d="M5.6,8.4 L10.4,3.6 M6.8,3.4 H10.6 V7.2" fill="none" stroke="#b4b4b4" stroke-width="1.3"/></svg>
<svg width="15" height="14" viewBox="0 0 15 14" style="left:144.2px;top:51px"><g fill="#f0f0f0"><rect x="0" y="0" width="3.4" height="3.4"/><rect x="11.6" y="0" width="3.4" height="3.4"/><rect x="0" y="10.6" width="3.4" height="3.4"/><rect x="11.6" y="10.6" width="3.4" height="3.4"/><rect x="4.6" y="1.1" width="5.8" height="1.3"/><rect x="4.6" y="11.6" width="5.8" height="1.3"/><rect x="1.1" y="4.6" width="1.3" height="4.8"/><rect x="12.6" y="4.6" width="1.3" height="4.8"/></g></svg>
<svg width="16" height="16.5" viewBox="0 0 16 16.5" style="left:176px;top:49.5px"><circle cx="8" cy="8.25" r="6.3" fill="none" stroke="#b4b4b4" stroke-width="1.2"/><g fill="#b4b4b4"><path d="M8,2.6 L10,5.2 L6,5.2 Z"/><path d="M8,13.9 L10,11.3 L6,11.3 Z"/><path d="M2.4,8.25 L5,6.25 L5,10.25 Z"/><path d="M13.6,8.25 L11,6.25 L11,10.25 Z"/><rect x="7.3" y="4.8" width="1.4" height="6.9"/><rect x="4.6" y="7.55" width="6.8" height="1.4"/><path d="M12.4,0.4 L15.8,0.4 L15.8,3.8 Z"/><path d="M0.2,12.7 L0.2,16.1 L3.6,16.1 Z"/></g></svg>
<svg width="15.5" height="16" viewBox="0 0 15.5 16" style="left:209px;top:50px"><path d="M4.2,4.4 L13.6,14.4" stroke="#c4c4c4" stroke-width="2.7" stroke-linecap="round"/><path d="M3.7,1.0 A2.6,2.6 0 1 1 0.9,3.9" fill="none" stroke="#c4c4c4" stroke-width="2"/><path d="M11.6,3.6 L3.2,12.6" stroke="#c4c4c4" stroke-width="2.7"/><path d="M0.4,15.6 L1.5,11.6 L4.5,14.2 Z" fill="#c4c4c4"/><path d="M12.1,1.4 L14.3,3.4 L13.2,4.6 L11,2.6 Z" fill="#c4c4c4"/></svg>
<svg width="14.5" height="14" viewBox="0 0 14.5 14" style="left:246px;top:51px"><rect x="0.7" y="0.7" width="13" height="12.6" fill="none" stroke="#c4c4c4" stroke-width="1.2"/><path d="M2,12.2 L12.4,1.8" stroke="#a8a8a8" stroke-width="1"/><circle cx="7.2" cy="7" r="2.7" fill="#2c2c2c" stroke="#d9583a" stroke-width="1.05"/></svg>
<svg width="16" height="16" viewBox="0 0 16 16" style="left:312.5px;top:50.5px"><g fill="none" stroke="#b9b9b9" stroke-width="1.2"><path d="M7.5,0.8 L14,4 L14,10.6 L7.5,14 L1,10.6 L1,4 Z"/><path d="M1,4 L7.5,7.2 L14,4 M7.5,7.2 V14"/></g><circle cx="11" cy="11.6" r="2.3" fill="#2c2c2c" stroke="#d9583a" stroke-width="1.05"/></svg>
<svg width="16" height="14" viewBox="0 0 16 14" style="left:376.5px;top:51.5px"><g stroke="#8e8e8e" stroke-width="1" fill="none"><path d="M2.5,0 V11.5 M6.5,0 V5 M10.5,0 V4"/><path d="M0,2.5 H12.5 M0,6.5 H5"/></g><rect x="5.6" y="5.6" width="1.8" height="1.8" fill="#bdbdbd"/><rect x="5.6" y="10" width="1.8" height="1.8" fill="#bdbdbd"/><rect x="1.6" y="10" width="1.8" height="1.8" fill="#8e8e8e"/><path d="M9,7 H11.6 A3,3 0 0 1 11.6,13 H9" fill="none" stroke="#c0392b" stroke-width="1.9"/></svg>
<svg width="9" height="10.6" viewBox="0 0 9 10.6" style="left:901.8px;top:52.8px"><path d="M0,0 L8.6,5.3 L0,10.6 Z" fill="#c8c8c8"/></svg>
<svg width="8.4" height="10" viewBox="0 0 8.4 10" style="left:933.8px;top:53px"><rect x="0" y="0" width="3.2" height="10" fill="#dedede"/><rect x="5.1" y="0" width="3.2" height="10" fill="#dedede"/></svg>
<svg width="10.2" height="10" viewBox="0 0 10.2 10" style="left:965px;top:53px"><path d="M0,0 L7.2,5 L0,10 Z" fill="#868686"/><rect x="7.7" y="0" width="2.3" height="10" fill="#868686"/></svg>
<svg width="12.2" height="12.2" viewBox="0 0 12.2 12.2" style="left:1539px;top:52.3px"><circle cx="6.1" cy="6.1" r="6.1" fill="#8e8e8e"/><path d="M3,6.2 L5.3,8.5 L9.6,3.6" fill="none" stroke="#fff" stroke-width="1.9"/></svg>
<svg width="8.1" height="5.1" viewBox="0 0 8.1 5.1" style="left:1593.8px;top:55.9px"><path d="M0,0 L8.1,0 L4.05,5.1 Z" fill="#c4c4c4"/></svg>
<svg width="14.6" height="10.8" viewBox="0 0 14.6 10.8" style="left:1625px;top:52.4px"><path d="M3.4,10.8 A3.2,3.2 0 0 1 3,4.4 A4.4,4.4 0 0 1 11.4,3.8 A3.5,3.5 0 0 1 11.2,10.8 Z" fill="#c4c4c4"/></svg>
<svg width="8.1" height="5.1" viewBox="0 0 8.1 5.1" style="left:1722.2px;top:55.9px"><path d="M0,0 L8.1,0 L4.05,5.1 Z" fill="#c4c4c4"/></svg>
<svg width="8.1" height="5.1" viewBox="0 0 8.1 5.1" style="left:1810px;top:55.9px"><path d="M0,0 L8.1,0 L4.05,5.1 Z" fill="#c4c4c4"/></svg>
<svg width="8.1" height="5.1" viewBox="0 0 8.1 5.1" style="left:1895.6px;top:55.9px"><path d="M0,0 L8.1,0 L4.05,5.1 Z" fill="#c4c4c4"/></svg>
<svg width="11" height="9" viewBox="0 0 11 9" style="left:7.6px;top:78px"><g fill="#c4c4c4"><rect x="0" y="0.2" width="1.3" height="1.3"/><rect x="2.6" y="0.3" width="8.2" height="1.1"/><rect x="1.6" y="3.6" width="1.3" height="1.3"/><rect x="4.2" y="3.7" width="6.6" height="1.1"/><rect x="1.6" y="7" width="1.3" height="1.3"/><rect x="4.2" y="7.1" width="6.6" height="1.1"/></g></svg>
<svg width="9" height="10" viewBox="0 0 9 10" style="left:166.4px;top:77.5px"><rect x="0.55" y="4.9" width="7.6" height="4.2" rx=".7" fill="none" stroke="#c4c4c4" stroke-width="1.1"/><path d="M1.2,4.9 V2.9 A2.3,2.3 0 0 1 5.8,2.9 V3.7" fill="none" stroke="#c4c4c4" stroke-width="1.1"/></svg>
<svg width="2.2" height="10" viewBox="0 0 2.2 10" style="left:186.2px;top:77.8px"><rect x="0" y="0" width="2.2" height="2.2" fill="#c4c4c4"/><rect x="0" y="3.8" width="2.2" height="2.2" fill="#c4c4c4"/><rect x="0" y="7.6" width="2.2" height="2.2" fill="#c4c4c4"/></svg>
<svg width="12" height="12" viewBox="0 0 12 12" style="left:6.8px;top:96.2px"><path d="M6,0 V12 M0,6 H12" stroke="#c4c4c4" stroke-width="2"/></svg>
<svg width="7.4" height="4.4" viewBox="0 0 7.4 4.4" style="left:23.4px;top:100px"><path d="M0,0 L7.4,0 L3.7,4.4 Z" fill="#c4c4c4"/></svg>
<svg width="10" height="8" viewBox="0 0 10 8" style="left:47.6px;top:98.6px"><circle cx="3" cy="3" r="2.2" fill="none" stroke="#b4b4b4" stroke-width="1.1"/><path d="M4.6,4.6 L7,7.4" stroke="#b4b4b4" stroke-width="1.3"/><path d="M6.8,2.4 L9.8,2.4 L8.3,4.2 Z" fill="#b4b4b4"/></svg>
<svg width="7.5" height="9" viewBox="0 0 7.5 9" style="left:35px;top:117.8px"><path d="M0,0 L7.3,4.5 L0,9 Z" fill="#6c6c6c"/></svg>
<svg width="12.6" height="12" viewBox="0 0 12.6 12" style="left:47.2px;top:114.4px"><g fill="none" stroke="#e4e4e4" stroke-width="1.25"><path d="M0.9,6 L10.6,0.9 L10.6,11.1 Z"/><path d="M0.9,6 L7,6 M7,6 L10.6,0.9 M7,6 L10.6,11.1"/></g></svg>
<svg width="2.2" height="10" viewBox="0 0 2.2 10" style="left:187.2px;top:116px"><rect x="0" y="0" width="2.2" height="2.2" fill="#c4c4c4"/><rect x="0" y="3.8" width="2.2" height="2.2" fill="#c4c4c4"/><rect x="0" y="7.6" width="2.2" height="2.2" fill="#c4c4c4"/></svg>
<svg width="11.4" height="10.4" viewBox="0 0 11.4 10.4" style="left:209.8px;top:78px"><g stroke="#c4c4c4" stroke-width="1.2"><path d="M3.8,0 L3,10.4 M8.4,0 L7.6,10.4 M0.4,3.2 H11.4 M0,7.2 H11"/></g></svg>
<svg width="14.4" height="7.6" viewBox="0 0 14.4 7.6" style="left:286.6px;top:79.8px"><rect x="0" y="0" width="14.4" height="7.6" rx="3.8" fill="#c4c4c4"/><path d="M3.9,2 V5.6 M2.1,3.8 H5.7" stroke="#282828" stroke-width="1.1"/><circle cx="9.6" cy="4.6" r=".95" fill="#282828"/><circle cx="11.6" cy="2.9" r=".95" fill="#282828"/></svg>
<svg width="10.6" height="12" viewBox="0 0 10.6 12" style="left:363.6px;top:77.2px"><rect x="0" y="3.4" width="10.6" height="8.4" rx="1" fill="#c4c4c4"/><path d="M3,3.6 V2.2 A2.3,2.3 0 0 1 7.6,2.2 V3.6" fill="none" stroke="#c4c4c4" stroke-width="1.2"/><rect x="2.4" y="4.6" width="1.2" height="1.2" fill="#282828"/><rect x="7" y="4.6" width="1.2" height="1.2" fill="#282828"/></svg>
<svg width="2.2" height="10" viewBox="0 0 2.2 10" style="left:1469px;top:77.8px"><rect x="0" y="0" width="2.2" height="2.2" fill="#c4c4c4"/><rect x="0" y="3.8" width="2.2" height="2.2" fill="#c4c4c4"/><rect x="0" y="7.6" width="2.2" height="2.2" fill="#c4c4c4"/></svg>
<svg width="7.4" height="4.6" viewBox="0 0 7.4 4.6" style="left:310.4px;top:99.8px"><path d="M0,0 L7.4,0 L3.7,4.6 Z" fill="#c4c4c4"/></svg>
<svg width="9.4" height="13" viewBox="0 0 9.4 13" style="left:368.5px;top:95.6px"><circle cx="4.7" cy="4.4" r="4.3" fill="#c4c4c4"/><rect x="2.7" y="8" width="4" height="3.4" rx=".6" fill="#c4c4c4"/><rect x="2.4" y="9.6" width="4.6" height=".8" fill="#4a4a4a"/></svg>
<svg width="12.6" height="10.6" viewBox="0 0 12.6 10.6" style="left:393px;top:96.4px"><path d="M0,3.2 H2.4 L5.6,0.4 V10.2 L2.4,7.4 H0 Z" fill="#c4c4c4"/><path d="M7.4,3 Q8.8,5.3 7.4,7.6" fill="none" stroke="#c4c4c4" stroke-width="1.1"/><path d="M9.4,1.6 Q11.8,5.3 9.4,9" fill="none" stroke="#c4c4c4" stroke-width="1.1"/></svg>
<svg width="13" height="12" viewBox="0 0 13 12" style="left:417.4px;top:95.8px"><path d="M0,6.4 L5.6,3.8 L11.2,6.4 L5.6,9 Z" fill="#c4c4c4"/><path d="M0.6,9 L5.6,11.4 L10.6,9" fill="none" stroke="#c4c4c4" stroke-width="1.1"/><path d="M9.6,0 L10.5,2.3 L12.8,3.2 L10.5,4.1 L9.6,6.4 L8.7,4.1 L6.4,3.2 L8.7,2.3 Z" fill="#c4c4c4"/></svg>
<svg width="1" height="15" viewBox="0 0 1 15" style="left:437.2px;top:95px"><rect width="1" height="15" fill="#353535"/></svg>
<svg width="7.4" height="4.6" viewBox="0 0 7.4 4.6" style="left:441.6px;top:100px"><path d="M0,0 L7.4,0 L3.7,4.6 Z" fill="#c4c4c4"/></svg>
<svg width="14" height="12" viewBox="0 0 14 12" style="left:459.6px;top:96.2px"><path d="M0.8,6.3 Q7,0.6 13.2,6.3 Q7,11.6 0.8,6.3 Z" fill="none" stroke="#a4a4a4" stroke-width="1.1"/><path d="M4.5,6.2 A2.6,2.6 0 0 0 9.6,6.2" fill="none" stroke="#a4a4a4" stroke-width="1.1"/><path d="M1.6,11.5 L11.6,0.5" stroke="#a4a4a4" stroke-width="1.2"/></svg>
<svg width="14" height="13" viewBox="0 0 14 13" style="left:493.4px;top:95.6px"><g stroke="#c4c4c4" stroke-width="1.1" fill="none"><path d="M3.4,0 V12 M8.4,0 V5.6 M0,3 H12 M0,8 H6.4"/></g><path d="M7.6,6.8 L10,10 L12.4,6.8 M10,10 V13" stroke="#c4c4c4" stroke-width="1.5" fill="none"/></svg>
<svg width="1" height="15" viewBox="0 0 1 15" style="left:513px;top:95px"><rect width="1" height="15" fill="#353535"/></svg>
<svg width="7.4" height="4.6" viewBox="0 0 7.4 4.6" style="left:517.8px;top:100px"><path d="M0,0 L7.4,0 L3.7,4.6 Z" fill="#c4c4c4"/></svg>
<svg width="12" height="12" viewBox="0 0 12 12" style="left:1144.6px;top:96px"><path d="M3.2,3.3 L10.4,11" stroke="#c4c4c4" stroke-width="2.1" stroke-linecap="round"/><path d="M2.8,0.8 A2,2 0 1 1 0.7,3" fill="none" stroke="#c4c4c4" stroke-width="1.5"/><path d="M8.9,2.8 L2.5,9.6" stroke="#c4c4c4" stroke-width="2.1"/><path d="M0.3,12 L1.1,8.9 L3.5,10.9 Z" fill="#c4c4c4"/><path d="M9.3,1.1 L11,2.6 L10.1,3.6 L8.4,2.1 Z" fill="#c4c4c4"/></svg>
<svg width="11.4" height="8.2" viewBox="0 0 11.4 8.2" style="left:1170.4px;top:97.4px"><rect x="0" y="0" width="7.4" height="8.2" rx="1" fill="#c4c4c4"/><path d="M8.4,2.6 L11.4,0.8 V7.4 L8.4,5.6 Z" fill="#c4c4c4"/></svg>
<svg width="7.4" height="4.6" viewBox="0 0 7.4 4.6" style="left:1186.4px;top:100px"><path d="M0,0 L7.4,0 L3.7,4.6 Z" fill="#c4c4c4"/></svg>
<svg width="1" height="15" viewBox="0 0 1 15" style="left:1250.6px;top:95px"><rect width="1" height="15" fill="#3c3c3c"/></svg>
<svg width="7.4" height="4.6" viewBox="0 0 7.4 4.6" style="left:1254.8px;top:100px"><path d="M0,0 L7.4,0 L3.7,4.6 Z" fill="#c4c4c4"/></svg>
<svg width="10" height="8" viewBox="0 0 10 8" style="left:1280px;top:98.6px"><circle cx="3" cy="3" r="2.2" fill="none" stroke="#b4b4b4" stroke-width="1.1"/><path d="M4.6,4.6 L7,7.4" stroke="#b4b4b4" stroke-width="1.3"/><path d="M6.8,2.4 L9.8,2.4 L8.3,4.2 Z" fill="#b4b4b4"/></svg>
<svg width="10.4" height="10.4" viewBox="0 0 10.4 10.4" style="left:1494.2px;top:78px"><circle cx="5.2" cy="5.2" r="5.2" fill="#c4c4c4"/><rect x="4.4" y="4.4" width="1.6" height="3.8" fill="#3c3c3c"/><rect x="4.4" y="2" width="1.6" height="1.6" fill="#3c3c3c"/></svg>
<svg width="10.6" height="10" viewBox="0 0 10.6 10" style="left:1587px;top:78.4px"><g stroke="#c4c4c4" stroke-width="1.3" fill="none"><path d="M1.6,1.4 L9,8.6 M9,1.4 L1.6,8.6"/></g><g fill="#c4c4c4"><path d="M0,0 H3.8 L0,3.8 Z"/><path d="M10.6,0 H6.8 L10.6,3.8 Z"/><path d="M0,10 H3.8 L0,6.2 Z"/><path d="M10.6,10 H6.8 L10.6,6.2 Z"/></g></svg>
<svg width="9" height="10" viewBox="0 0 9 10" style="left:1885px;top:77.5px"><rect x="0.55" y="4.9" width="7.6" height="4.2" rx=".7" fill="none" stroke="#c4c4c4" stroke-width="1.1"/><path d="M1.2,4.9 V2.9 A2.3,2.3 0 0 1 5.8,2.9 V3.7" fill="none" stroke="#c4c4c4" stroke-width="1.1"/></svg>
<svg width="2.2" height="10" viewBox="0 0 2.2 10" style="left:1905px;top:77.8px"><rect x="0" y="0" width="2.2" height="2.2" fill="#c4c4c4"/><rect x="0" y="3.8" width="2.2" height="2.2" fill="#c4c4c4"/><rect x="0" y="7.6" width="2.2" height="2.2" fill="#c4c4c4"/></svg>
<svg width="12.4" height="10.4" viewBox="0 0 12.4 10.4" style="left:6.6px;top:709px"><path d="M0,1.2 Q0,0 1.2,0 L4.4,0 L5.8,1.8 L11.2,1.8 Q12.4,1.8 12.4,3 L12.4,9.2 Q12.4,10.4 11.2,10.4 L1.2,10.4 Q0,10.4 0,9.2 Z" fill="#c4c4c4"/></svg>
<svg width="10.2" height="10.2" viewBox="0 0 10.2 10.2" style="left:90px;top:709.2px"><rect x="0" y="0" width="10.2" height="10.2" rx="1" fill="#c4c4c4"/><g fill="#282828"><rect x="1.6" y="1.9" width="7" height="1.1"/><rect x="1.6" y="4" width="7" height="1.1"/><rect x="1.6" y="6.1" width="7" height="1.1"/><rect x="1.6" y="8.2" width="4.2" height="1"/></g></svg>
<svg width="9" height="10" viewBox="0 0 9 10" style="left:1449.6px;top:709.4px"><rect x="0.55" y="4.9" width="7.6" height="4.2" rx=".7" fill="none" stroke="#c4c4c4" stroke-width="1.1"/><path d="M1.2,4.9 V2.9 A2.3,2.3 0 0 1 5.8,2.9 V3.7" fill="none" stroke="#c4c4c4" stroke-width="1.1"/></svg>
<svg width="2.2" height="10" viewBox="0 0 2.2 10" style="left:1469px;top:709.2px"><rect x="0" y="0" width="2.2" height="2.2" fill="#c4c4c4"/><rect x="0" y="3.8" width="2.2" height="2.2" fill="#c4c4c4"/><rect x="0" y="7.6" width="2.2" height="2.2" fill="#c4c4c4"/></svg>
<svg width="12" height="12" viewBox="0 0 12 12" style="left:7.4px;top:728px"><path d="M6,0 V12 M0,6 H12" stroke="#c4c4c4" stroke-width="2"/></svg>
<svg width="7.4" height="4.4" viewBox="0 0 7.4 4.4" style="left:24.4px;top:732px"><path d="M0,0 L7.4,0 L3.7,4.4 Z" fill="#c4c4c4"/></svg>
<svg width="8" height="8" viewBox="0 0 8 8" style="left:1068.6px;top:730.6px"><circle cx="3" cy="3" r="2.1" fill="none" stroke="#c4c4c4" stroke-width="1.2"/><path d="M4.6,4.6 L7.4,7.4" stroke="#c4c4c4" stroke-width="1.5"/></svg>
<svg width="12.4" height="13" viewBox="0 0 12.4 13" style="left:1372.8px;top:727px"><rect x="1.8" y="0" width="5.8" height="5" fill="#c4c4c4"/><circle cx="3.6" cy="9.4" r="3.6" fill="#c4c4c4"/><path d="M8.6,3.6 L12.4,10.6 L6.6,10.6 Z" fill="#c4c4c4"/></svg>
<svg width="10.6" height="10.4" viewBox="0 0 10.6 10.4" style="left:1399px;top:728.4px"><path d="M0,5.4 L5.2,0.6 L9.6,0 L10.4,0.8 L10,5 L4.8,10.2 Z" fill="#c4c4c4"/><circle cx="8" cy="2.4" r=".9" fill="#3c3c3c"/></svg>
<svg width="13.2" height="12.6" viewBox="0 0 13.2 12.6" style="left:1424.4px;top:727.2px"><path d="M6.6,0 L8.5,4.3 L13.2,4.8 L9.7,7.9 L10.7,12.5 L6.6,10.1 L2.5,12.5 L3.5,7.9 L0,4.8 L4.7,4.3 Z" fill="#8a8a8a"/></svg>
<svg width="14" height="12" viewBox="0 0 14 12" style="left:1450px;top:728px"><path d="M0.8,6.3 Q7,0.6 13.2,6.3 Q7,11.6 0.8,6.3 Z" fill="none" stroke="#a4a4a4" stroke-width="1.1"/><path d="M4.5,6.2 A2.6,2.6 0 0 0 9.6,6.2" fill="none" stroke="#a4a4a4" stroke-width="1.1"/><path d="M1.6,11.5 L11.6,0.5" stroke="#a4a4a4" stroke-width="1.2"/></svg>
</div></body></html>
